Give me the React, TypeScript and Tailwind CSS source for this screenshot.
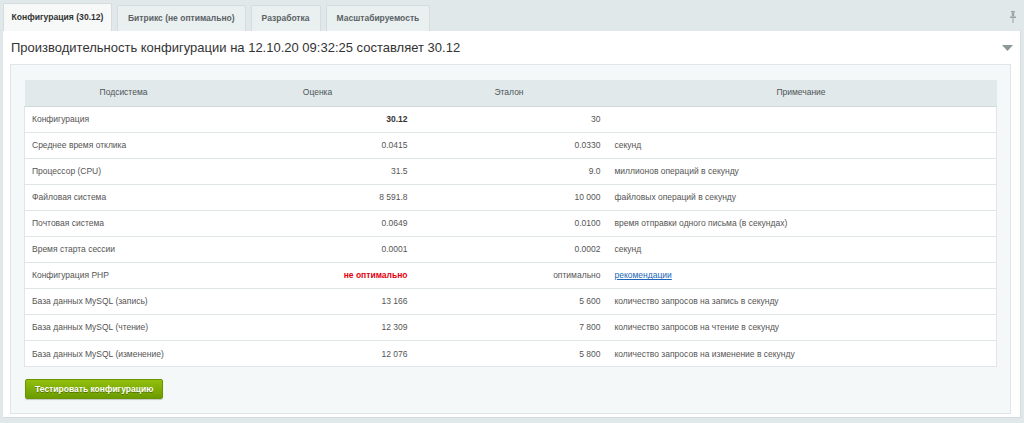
const rows: { name: string; score: React.ReactNode; ref: string; note: React.ReactNode }[] = [
  { name: "Конфигурация", score: <b className="text-[#333]">30.12</b>, ref: "30", note: "" },
  { name: "Среднее время отклика", score: "0.0415", ref: "0.0330", note: "секунд" },
  { name: "Процессор (CPU)", score: "31.5", ref: "9.0", note: "миллионов операций в секунду" },
  { name: "Файловая система", score: "8 591.8", ref: "10 000", note: "файловых операций в секунду" },
  { name: "Почтовая система", score: "0.0649", ref: "0.0100", note: "время отправки одного письма (в секундах)" },
  { name: "Время старта сессии", score: "0.0001", ref: "0.0002", note: "секунд" },
  {
    name: "Конфигурация PHP",
    score: <b className="text-[#e3000f]">не оптимально</b>,
    ref: "оптимально",
    note: <a href="#" className="text-[#2066b8] underline">рекомендации</a>,
  },
  { name: "База данных MySQL (запись)", score: "13 166", ref: "5 600", note: "количество запросов на запись в секунду" },
  { name: "База данных MySQL (чтение)", score: "12 309", ref: "7 800", note: "количество запросов на чтение в секунду" },
  { name: "База данных MySQL (изменение)", score: "12 076", ref: "5 800", note: "количество запросов на изменение в секунду" },
];

const tabs = ["Битрикс (не оптимально)", "Разработка", "Масштабируемость"];

export default function App() {
  return (
    <div className="w-[1024px] h-[423px] bg-[#e1e8ea] font-['Liberation_Sans',Arial,sans-serif] pl-[3px] pr-[3px] pt-[3px] overflow-hidden">
      {/* Tabs */}
      <div className="flex items-end h-[28px] relative">
        <div className="h-[28px] w-[109px] bg-[#f7f9f9] border border-b-0 border-[#d4dcde] rounded-t-[2px] flex items-center justify-center text-[8.6px] font-bold text-[#333]">
          Конфигурация (30.12)
        </div>
        {tabs.map((t) => (
          <div
            key={t}
            className="ml-[5px] h-[26px] px-[10px] bg-[#eaeff0] border border-b-0 border-[#d4dcde] rounded-t-[2px] flex items-center text-[8.5px] font-bold text-[#5a6366]"
          >
            {t}
          </div>
        ))}
        <svg className="absolute right-[5px] top-[8px]" width="6" height="12" viewBox="0 0 6 12">
          <rect x="1" y="0" width="4" height="1.5" fill="#9aa3a6" />
          <rect x="1.8" y="1.5" width="2.4" height="4" fill="#9aa3a6" />
          <rect x="0" y="5.5" width="6" height="1.5" fill="#9aa3a6" />
          <rect x="2.5" y="7" width="1" height="5" fill="#9aa3a6" />
        </svg>
      </div>

      {/* Panel */}
      <div className="bg-white border-r border-b border-[#d4dcde] w-[1018px] h-[387px] pl-[7px] pr-[9px]">
        <div className="h-[33px] flex items-center justify-between">
          <h2 className="text-[13px] text-[#333] pl-[1px] font-normal">
            Производительность конфигурации на 12.10.20 09:32:25 составляет 30.12
          </h2>
          <svg className="mr-[-2px]" width="11" height="6" viewBox="0 0 11 6">
            <path d="M0 0h11L5.5 6z" fill="#8e979a" />
          </svg>
        </div>

        <div className="bg-[#f5f8f9] border border-[#dfe6e8] px-[13px] pt-[15px] pb-[14px]">
          <table className="w-full border-collapse text-[8.5px] text-[#555]">
            <thead>
              <tr className="h-[26px] bg-[#e2e9eb] text-[#4c5558]">
                <th className="w-[198px] font-normal border-b border-[#cfd8db]">Подсистема</th>
                <th className="w-[190px] font-normal border-b border-[#cfd8db]">Оценка</th>
                <th className="w-[193px] font-normal border-b border-[#cfd8db]">Эталон</th>
                <th className="font-normal border-b border-[#cfd8db]">Примечание</th>
              </tr>
            </thead>
            <tbody className="bg-white">
              {rows.map((r) => (
                <tr key={r.name} className="h-[26.1px] border-b border-l border-r border-[#e0e6e8]">
                  <td className="pl-[7px]">{r.name}</td>
                  <td className="text-right pr-[5px]">{r.score}</td>
                  <td className="text-right pr-[5px]">{r.ref}</td>
                  <td className="pl-[9px]">{r.note}</td>
                </tr>
              ))}
            </tbody>
          </table>

          <button className="mt-[12px] ml-[1px] h-[20px] px-[9px] rounded-[2px] bg-gradient-to-b from-[#92bf0e] to-[#6c9b00] border border-[#6a9500] text-white text-[8.5px] font-bold [text-shadow:0_1px_0_rgba(0,0,0,0.35)] shadow-[0_1px_1px_rgba(0,0,0,0.2)]">
            Тестировать конфигурацию
          </button>
        </div>
      </div>
    </div>
  );
}
